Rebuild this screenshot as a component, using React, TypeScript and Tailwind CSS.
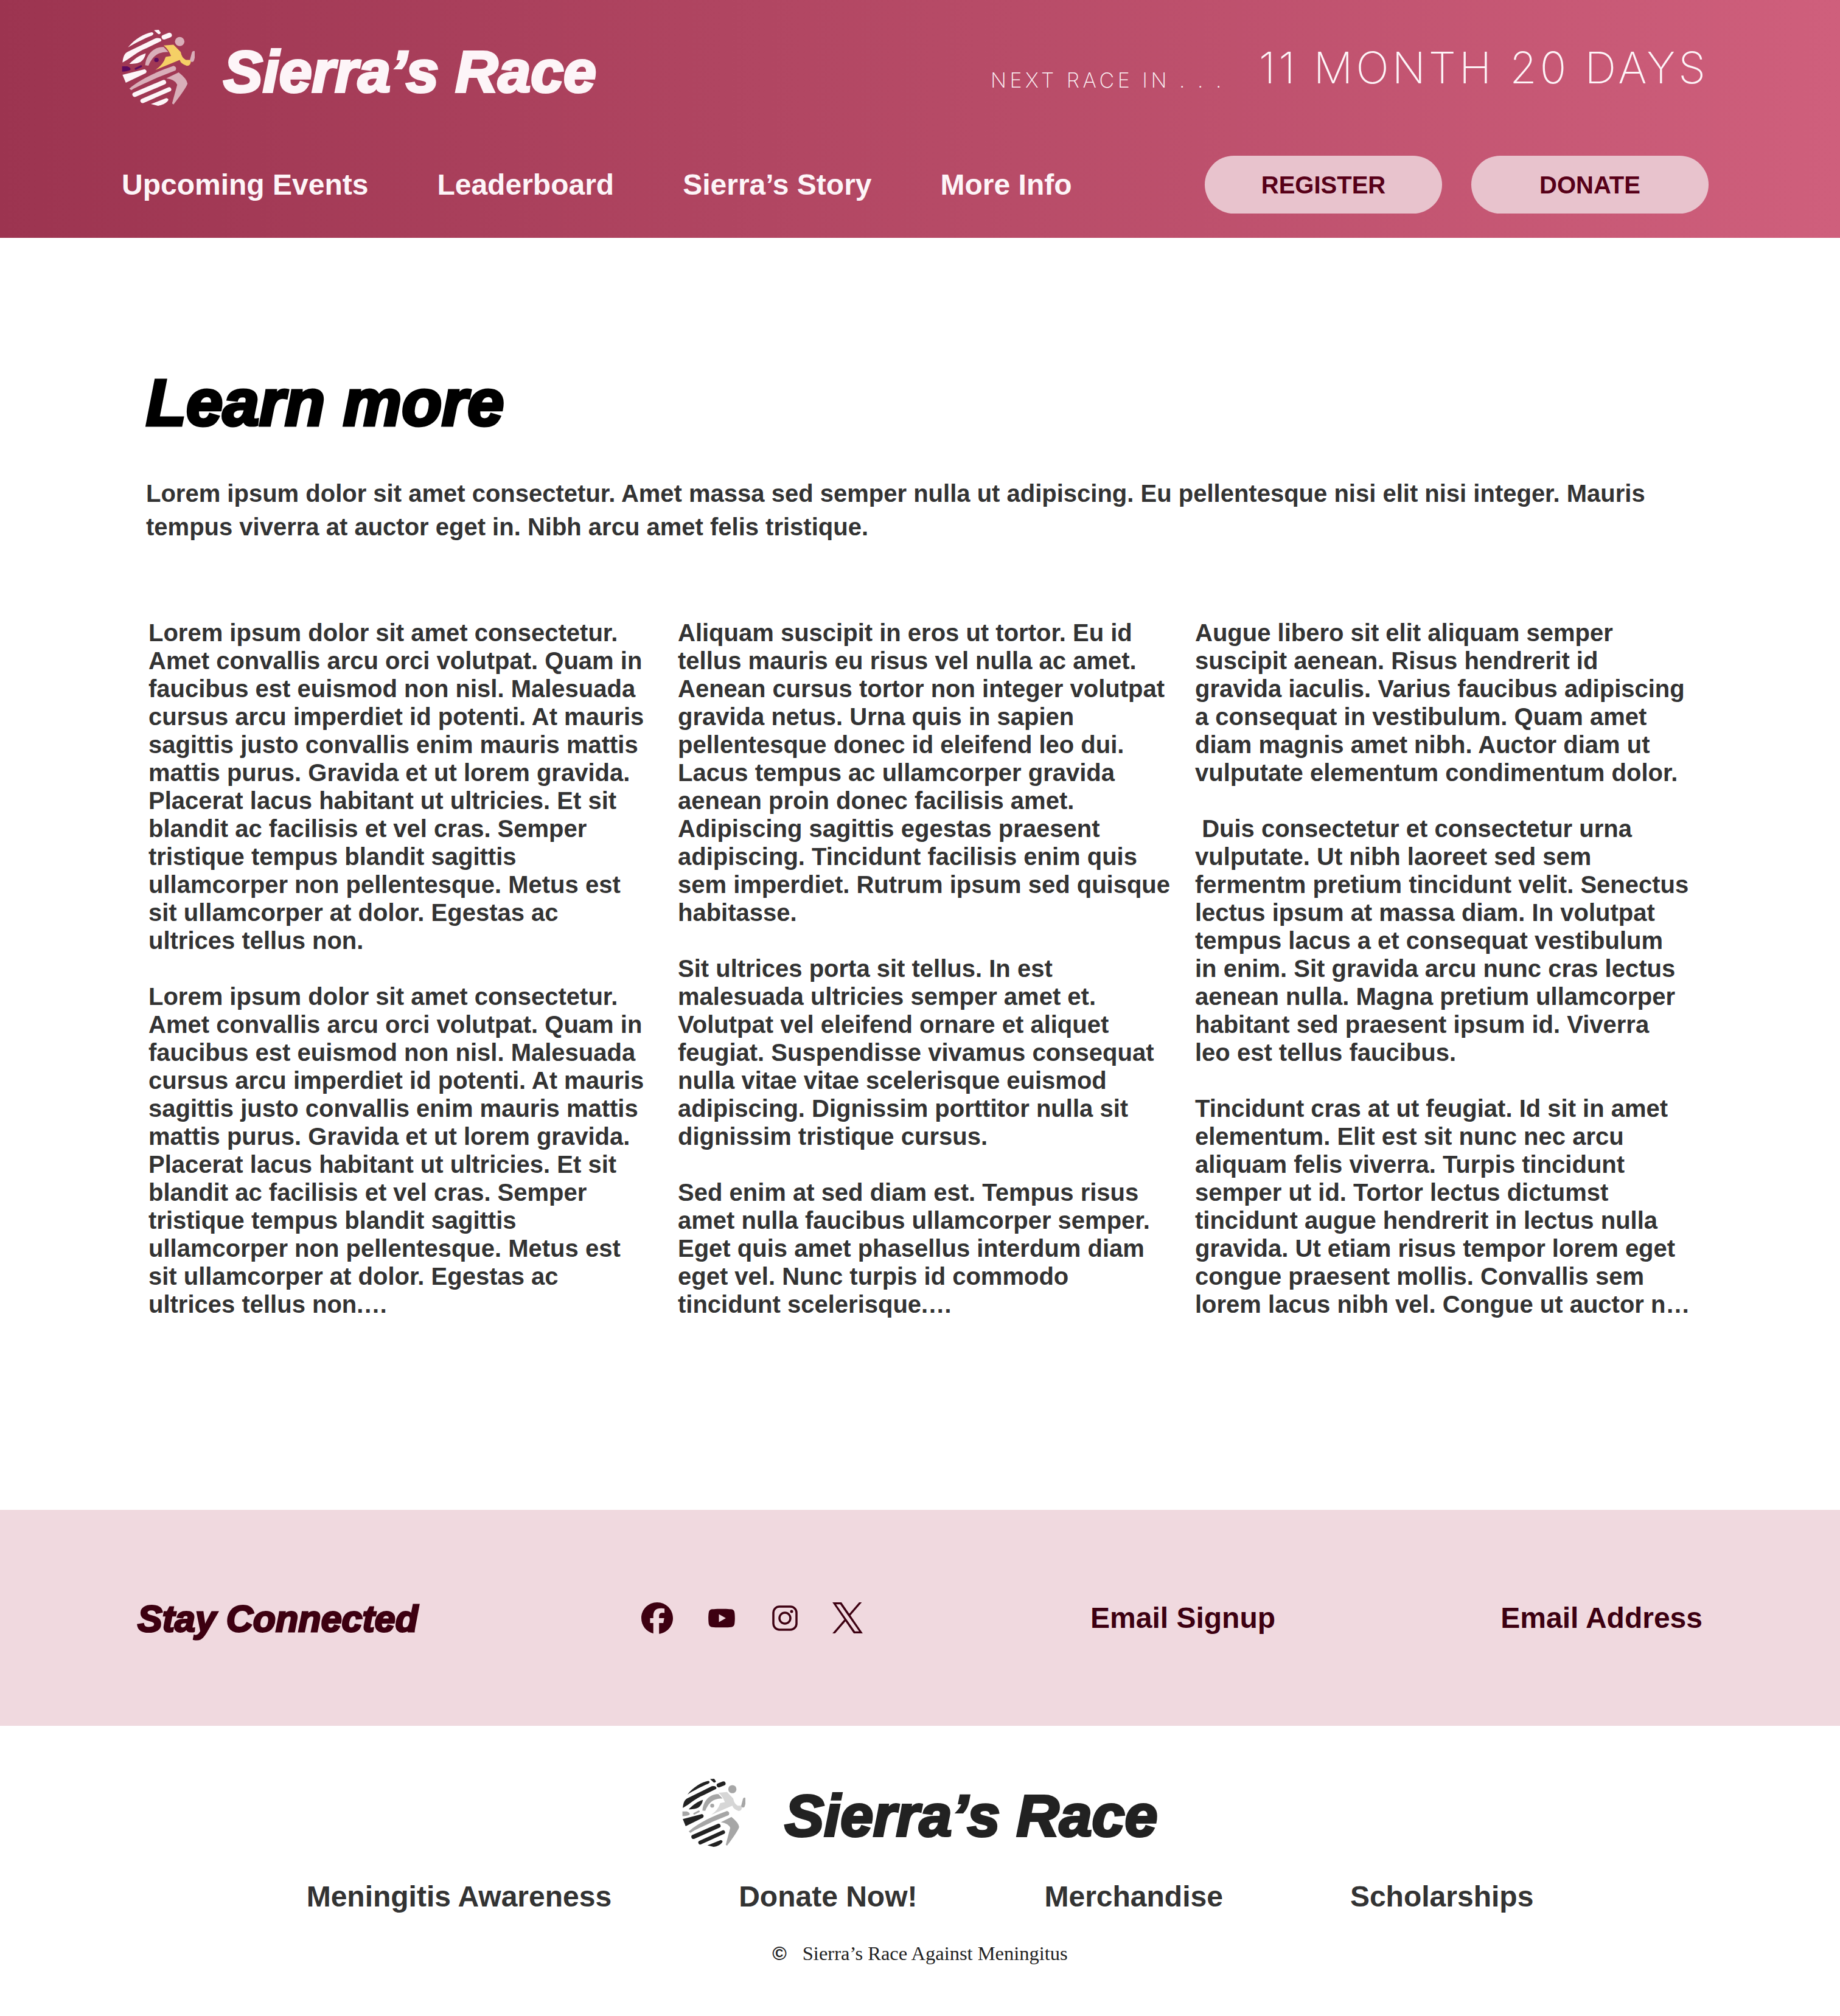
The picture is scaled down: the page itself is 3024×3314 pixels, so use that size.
import { FaFacebook, FaYoutube } from 'react-icons/fa6';

type LogoColors = { stripe: string; pink: string; body: string; accent: string };

function Logo({ colors, className }: { colors: LogoColors; className: string }) {
  const { stripe, pink, body, accent } = colors;
  return (
    <svg viewBox="58 50 355 390" preserveAspectRatio="none" className={className}>
      <path fill={stripe} d="M88 142C120 100 170 70 205 65Q220 70 205 82C170 95 125 120 88 142Z" />
      <path fill={stripe} d="M215 55L238 53L248 68Q245 78 235 74Z" />
      <path stroke={stripe} strokeWidth="24" strokeLinecap="round" d="M264 90L290 80" />
      <path fill={stripe} d="M62 218C65 190 70 175 85 165L225 95Q255 92 250 110L180 145C130 165 110 190 62 218Z" />
      <path fill={stripe} d="M95 225C120 200 145 180 175 172Q170 200 150 215C130 225 110 225 95 225Z" />
      <path fill={accent} d="M60 237L85 237Q105 245 100 255Q90 263 60 264Z" />
      <path stroke={accent} strokeWidth="10" strokeLinecap="round" d="M126 250L152 237" />
      <path fill={stripe} d="M62 280L170 252Q185 260 175 272L78 320Z" />
      <path fill={pink} d="M95 350C150 300 240 260 310 235Q328 240 320 258L230 295C180 320 130 340 105 358Z" />
      <path stroke={stripe} strokeWidth="24" strokeLinecap="round" d="M122 380L262 318" />
      <path stroke={stripe} strokeWidth="22" strokeLinecap="round" d="M160 412L288 354" />
      <path fill={stripe} d="M200 428L275 398Q292 402 280 415Q265 432 235 437Z" />
      <path fill={pink} d="M275 298L335 268Q375 300 378 325Q370 350 310 430L303 425L328 330Q320 305 275 298Z" />
      <circle cx="340" cy="112" r="23" fill={pink} />
      <path fill={pink} d="M172 232C178 170 220 138 262 140L285 165C250 165 215 170 188 234Z" />
      <path fill={body} d="M262 132L310 128L345 165Q350 195 370 205L395 205Q395 235 375 235Q345 225 340 205L222 256Q260 230 272 190L298 185Q285 150 262 132Z" />
      <path stroke={pink} strokeWidth="20" strokeLinecap="round" d="M400 205L409 170" />
      <circle cx="227" cy="205" r="11" fill={accent} />
    </svg>
  );
}

const headerLogo = { stripe: '#fdf5f8', pink: '#d9aeb9', body: '#f5d066', accent: '#5a0a5e' };
const footerLogo = { stripe: '#222222', pink: '#a6a6a6', body: '#d6d6d6', accent: '#a6a6a6' };

const brandFont = "font-['Liberation_Sans',sans-serif] font-bold italic";

const columns = [
  {
    className: 'w-[820px] ml-[4px]',
    text: `Lorem ipsum dolor sit amet consectetur. Amet convallis arcu orci volutpat. Quam in faucibus est euismod non nisl. Malesuada cursus arcu imperdiet id potenti. At mauris sagittis justo convallis enim mauris mattis mattis purus. Gravida et ut lorem gravida. Placerat lacus habitant ut ultricies. Et sit blandit ac facilisis et vel cras. Semper tristique tempus blandit sagittis ullamcorper non pellentesque. Metus est sit ullamcorper at dolor. Egestas ac ultrices tellus non.

Lorem ipsum dolor sit amet consectetur. Amet convallis arcu orci volutpat. Quam in faucibus est euismod non nisl. Malesuada cursus arcu imperdiet id potenti. At mauris sagittis justo convallis enim mauris mattis mattis purus. Gravida et ut lorem gravida. Placerat lacus habitant ut ultricies. Et sit blandit ac facilisis et vel cras. Semper tristique tempus blandit sagittis ullamcorper non pellentesque. Metus est sit ullamcorper at dolor. Egestas ac ultrices tellus non.…`,
  },
  {
    className: 'w-[820px] ml-[50px]',
    text: `Aliquam suscipit in eros ut tortor. Eu id tellus mauris eu risus vel nulla ac amet. Aenean cursus tortor non integer volutpat gravida netus. Urna quis in sapien pellentesque donec id eleifend leo dui. Lacus tempus ac ullamcorper gravida aenean proin donec facilisis amet. Adipiscing sagittis egestas praesent adipiscing. Tincidunt facilisis enim quis sem imperdiet. Rutrum ipsum sed quisque habitasse.

Sit ultrices porta sit tellus. In est malesuada ultricies semper amet et. Volutpat vel eleifend ornare et aliquet feugiat. Suspendisse vivamus consequat nulla vitae vitae scelerisque euismod adipiscing. Dignissim porttitor nulla sit dignissim tristique cursus.

Sed enim at sed diam est. Tempus risus amet nulla faucibus ullamcorper semper. Eget quis amet phasellus interdum diam eget vel. Nunc turpis id commodo tincidunt scelerisque.…`,
  },
  {
    className: 'w-[815px] ml-[30px]',
    text: `Augue libero sit elit aliquam semper suscipit aenean. Risus hendrerit id gravida iaculis. Varius faucibus adipiscing a consequat in vestibulum. Quam amet diam magnis amet nibh. Auctor diam ut vulputate elementum condimentum dolor.

 Duis consectetur et consectetur urna vulputate. Ut nibh laoreet sed sem fermentm pretium tincidunt velit. Senectus lectus ipsum at massa diam. In volutpat tempus lacus a et consequat vestibulum in enim. Sit gravida arcu nunc cras lectus aenean nulla. Magna pretium ullamcorper habitant sed praesent ipsum id. Viverra leo est tellus faucibus.

Tincidunt cras at ut feugiat. Id sit in amet elementum. Elit est sit nunc nec arcu aliquam felis viverra. Turpis tincidunt semper ut id. Tortor lectus dictumst tincidunt augue hendrerit in lectus nulla gravida. Ut etiam risus tempor lorem eget congue praesent mollis. Convallis sem lorem lacus nibh vel. Congue ut auctor n…`,
  },
];

export default function App() {
  return (
    <div className="w-[3024px] h-[3314px] bg-white font-['Liberation_Sans',sans-serif] font-bold text-[#333333]">
      <header className="h-[391px] pl-[200px] pr-[216px] pt-[45px] bg-gradient-to-r from-[#9c3450] to-[#cf5f7c] text-[#fdf5f8]">
        <div className="flex items-center h-[133px]">
          <Logo colors={headerLogo} className="w-[120px] h-[127px]" />
          <div className={`${brandFont} ml-[47px] mt-[12px] text-[97px] leading-none [-webkit-text-stroke:4px_#fdf5f8]`}>Sierra’s Race</div>
          <div className="ml-auto flex items-end pb-[2px] font-['Inter',sans-serif] font-extralight uppercase">
            <span className="text-[34px] leading-none tracking-[5.5px] translate-y-[2px]">Next race in . . .</span>
            <span className="ml-[56px] text-[72px] leading-none tracking-[5px]">11 Month 20 Days</span>
          </div>
        </div>
        <div className="flex items-center mt-[78px]">
          <nav className="flex gap-[113px] text-[48px] leading-none">
            <span>Upcoming Events</span>
            <span>Leaderboard</span>
            <span>Sierra’s Story</span>
            <span>More Info</span>
          </nav>
          <div className="ml-auto flex gap-[48px] text-[#570018] text-[40px]">
            <button className="w-[390px] h-[95px] rounded-[48px] bg-[#e8c3cd]">REGISTER</button>
            <button className="w-[390px] h-[95px] rounded-[48px] bg-[#e8c3cd]">DONATE</button>
          </div>
        </div>
      </header>

      <main className="h-[2091px] px-[240px] pt-[217px]">
        <h1 className={`${brandFont} text-[108px] leading-none text-black [-webkit-text-stroke:5px_black]`}>Learn more</h1>
        <p className="mt-[68px] w-[2520px] text-[40px] leading-[55px]">
          Lorem ipsum dolor sit amet consectetur. Amet massa sed semper nulla ut adipiscing. Eu pellentesque nisi elit nisi integer. Mauris tempus viverra at auctor eget in. Nibh arcu amet felis tristique.
        </p>
        <div className="flex mt-[123px]">
          {columns.map((col, i) => (
            <p key={i} className={`${col.className} shrink-0 text-[40px] leading-[46px] whitespace-pre-wrap`}>
              {col.text}
            </p>
          ))}
        </div>
      </main>

      <section className="flex items-center h-[355px] bg-[#f0d9df] text-[#3d0011] text-[48px]">
        <div className={`${brandFont} ml-[226px] mt-[4px] w-[828px] text-[61px] [-webkit-text-stroke:3px_#3d0011]`}>Stay Connected</div>
        <div className="flex items-center w-[738px]">
          <FaFacebook className="w-[52px] h-[52px]" />
          <FaYoutube className="ml-[57px] w-[46px] h-[46px]" />
          <svg viewBox="0 0 42 42" fill="none" stroke="currentColor" strokeWidth="3.5" className="ml-[60px] w-[42px] h-[42px]">
            <rect x="2" y="2" width="38" height="38" rx="10" />
            <circle cx="21" cy="21" r="9" />
            <circle cx="32" cy="10" r="2.5" fill="currentColor" stroke="none" />
          </svg>
          <svg viewBox="0 0 1200 1227" fill="currentColor" className="ml-[57px] w-[50px] h-[51px]">
            <path d="M714.163 519.284L1160.89 0H1055.03L667.137 450.887L357.328 0H0L468.492 681.821L0 1226.37H105.866L515.491 750.218L842.672 1226.37H1200L714.137 519.284H714.163ZM569.165 687.828L521.697 619.934L144.011 79.6944H306.615L611.412 515.685L658.88 583.579L1055.08 1150.3H892.476L569.165 687.854V687.828Z" />
          </svg>
        </div>
        <span>Email Signup</span>
        <span className="ml-auto mr-[226px]">Email Address</span>
      </section>

      <footer className="flex flex-col items-center pt-[86px]">
        <div className="flex items-center">
          <Logo colors={footerLogo} className="w-[104px] h-[114px]" />
          <div className={`${brandFont} ml-[64px] mt-[8px] text-[97px] leading-none text-[#222222] [-webkit-text-stroke:4px_#222222]`}>Sierra’s Race</div>
        </div>
        <nav className="flex gap-[209px] mt-[57px] text-[48px] leading-none">
          <span>Meningitis Awareness</span>
          <span>Donate Now!</span>
          <span>Merchandise</span>
          <span>Scholarships</span>
        </nav>
        <div className="flex items-center mt-[53px] text-[#222222]">
          <span className="text-[32px] leading-none">©</span>
          <span className="ml-[26px] font-['Liberation_Serif',serif] font-normal text-[32.5px] leading-none">Sierra’s Race Against Meningitus</span>
        </div>
      </footer>
    </div>
  );
}
